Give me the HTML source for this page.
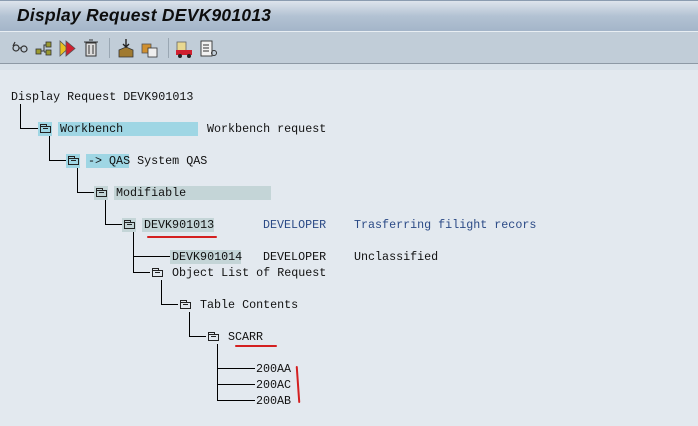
<!DOCTYPE html>
<html><head><meta charset="utf-8"><style>
*{margin:0;padding:0;box-sizing:border-box}
body{width:698px;height:426px;overflow:hidden;background:#e3e9ef;position:relative;font-family:"Liberation Mono",monospace;font-size:11.7px;color:#111}
#title{position:absolute;left:0;top:0;width:698px;height:31px;background:linear-gradient(#dde4ec,#b3c2d3 50%,#a4b5c9);border-top:1px solid #8b9cb0}
#title span{position:absolute;left:17px;top:4px;font:italic bold 17.4px "Liberation Sans",sans-serif;color:#0d0d0d;letter-spacing:.3px}
#tb{position:absolute;left:0;top:31px;width:698px;height:33px;background:#c1cdd8;border-top:1px solid #e8eef3;border-bottom:1px solid #8d99a5}
#strip{position:absolute;left:0;top:64px;width:698px;height:6px;background:#d9e2ea}
.t{position:absolute;line-height:14px;white-space:pre}
.h{position:absolute;height:14px}
.l{position:absolute;background:#000}
.f{position:absolute;width:14px;height:14px}
.f i{position:absolute;left:2px;top:4px;width:11px;height:7px;border:1px solid #222}
.f i:before{content:"";position:absolute;left:-1px;top:-3px;width:5px;height:2px;border:1px solid #222;border-bottom:none}
.f i:after{content:"";position:absolute;left:2px;top:1px;width:5px;height:1px;background:#222}
.r{position:absolute;background:#d42020;border-radius:2px}
.sep{position:absolute;top:38px;width:1px;height:20px;background:#9aa7b3}
</style></head><body>
<div id="title"><span>Display Request DEVK901013</span></div>
<div id="tb">
<svg width="230" height="33" style="position:absolute;left:0;top:0">
<g fill="none" stroke="#333" stroke-width="1.2"><circle cx="16" cy="16" r="3"/><circle cx="24" cy="17" r="3"/><path d="M13 14l2-4M19 16h2"/></g>
<g><rect x="36" y="17" width="5" height="5" fill="#9a9a30" stroke="#333" stroke-width=".8"/><rect x="46" y="10" width="5" height="5" fill="#9a9a30" stroke="#333" stroke-width=".8"/><rect x="46" y="18" width="5" height="5" fill="#9a9a30" stroke="#333" stroke-width=".8"/><path d="M41 19h3v-6h2M44 20h2" stroke="#333" fill="none"/></g>
<path d="M60 9v15l8-7.5z" fill="#e8c020" stroke="#555" stroke-width=".8"/><path d="M66 9v15l9-7.5z" fill="#d02030" stroke="#555" stroke-width=".8"/>
<rect x="86" y="11" width="10" height="13" fill="#ddd" stroke="#333"/><path d="M84 10h14M89 8h4M89 13v9M93 13v9" stroke="#333" fill="none"/>
<path d="M119 18l7-3 7 3v7h-14z" fill="#a07a30" stroke="#333" stroke-width=".8"/><path d="M126 7v8M123 12l3 3 3-3" stroke="#222" fill="none" stroke-width="1.4"/>
<rect x="142" y="12" width="9" height="9" fill="#d09030" stroke="#555" stroke-width=".8"/><rect x="148" y="16" width="9" height="9" fill="#eee" stroke="#333" stroke-width=".8"/>
<rect x="177" y="10" width="9" height="10" fill="#e8d890" stroke="#666" stroke-width=".8"/><rect x="176" y="18" width="16" height="5" fill="#d02030"/><circle cx="180" cy="24" r="2" fill="#222"/><circle cx="189" cy="24" r="2" fill="#222"/>
<rect x="201" y="9" width="11" height="15" fill="#f2f2f2" stroke="#333" stroke-width=".9"/><path d="M203 13h6M203 16h6M203 19h6" stroke="#333"/><circle cx="214" cy="21" r="2.5" fill="none" stroke="#333"/>
</svg>
</div>
<div class="sep" style="left:109px"></div><div class="sep" style="left:168px"></div>
<div id="strip"></div>

<div class="t" style="left:11px;top:90px">Display Request DEVK901013</div>
<div class="l" style="left:20px;top:104px;width:1px;height:25px"></div><div class="l" style="left:20px;top:128px;width:18px;height:1px"></div>
<div class="h" style="left:38px;top:122px;width:14px;background:#9fd6e4"></div><div class="f" style="left:38px;top:122px"><i></i></div>
<div class="h" style="left:58px;top:122px;width:140px;background:#9fd6e4"></div>
<div class="t" style="left:60px;top:122px">Workbench</div><div class="t" style="left:207px;top:122px">Workbench request</div>

<div class="l" style="left:49px;top:136px;width:1px;height:25px"></div><div class="l" style="left:49px;top:160px;width:17px;height:1px"></div>
<div class="h" style="left:66px;top:154px;width:14px;background:#9fd6e4"></div><div class="f" style="left:66px;top:154px"><i></i></div>
<div class="h" style="left:86px;top:154px;width:43px;background:#9fd6e4"></div>
<div class="t" style="left:88px;top:154px">-> QAS System QAS</div>

<div class="l" style="left:77px;top:168px;width:1px;height:25px"></div><div class="l" style="left:77px;top:192px;width:17px;height:1px"></div>
<div class="h" style="left:94px;top:186px;width:14px;background:#c4d5d7"></div><div class="f" style="left:94px;top:186px"><i></i></div>
<div class="h" style="left:114px;top:186px;width:157px;background:#c4d5d7"></div>
<div class="t" style="left:116px;top:186px">Modifiable</div>

<div class="l" style="left:105px;top:200px;width:1px;height:25px"></div><div class="l" style="left:105px;top:224px;width:17px;height:1px"></div>
<div class="h" style="left:122px;top:218px;width:14px;background:#c4d5d7"></div><div class="f" style="left:122px;top:218px"><i></i></div>
<div class="h" style="left:142px;top:218px;width:72px;background:#c4d5d7"></div>
<div class="t" style="left:144px;top:218px">DEVK901013</div>
<div class="t" style="left:263px;top:218px;color:#2b4a86">DEVELOPER</div><div class="t" style="left:354px;top:218px;color:#2b4a86">Trasferring filight recors</div>
<div class="r" style="left:147px;top:236px;width:70px;height:2px"></div>

<div class="l" style="left:133px;top:232px;width:1px;height:41px"></div>
<div class="l" style="left:133px;top:256px;width:38px;height:1px"></div>
<div class="l" style="left:133px;top:272px;width:17px;height:1px"></div>
<div class="h" style="left:170px;top:250px;width:71px;background:#c4d5d7"></div>
<div class="t" style="left:172px;top:250px">DEVK901014</div><div class="t" style="left:263px;top:250px">DEVELOPER</div><div class="t" style="left:354px;top:250px">Unclassified</div>
<div class="f" style="left:150px;top:266px"><i></i></div><div class="t" style="left:172px;top:266px">Object List of Request</div>

<div class="l" style="left:161px;top:280px;width:1px;height:25px"></div><div class="l" style="left:161px;top:304px;width:17px;height:1px"></div>
<div class="f" style="left:178px;top:298px"><i></i></div><div class="t" style="left:200px;top:298px">Table Contents</div>

<div class="l" style="left:189px;top:312px;width:1px;height:25px"></div><div class="l" style="left:189px;top:336px;width:17px;height:1px"></div>
<div class="f" style="left:206px;top:330px"><i></i></div><div class="t" style="left:228px;top:330px">SCARR</div>
<div class="r" style="left:235px;top:345px;width:42px;height:2px"></div>

<div class="l" style="left:217px;top:344px;width:1px;height:57px"></div>
<div class="l" style="left:217px;top:368px;width:38px;height:1px"></div>
<div class="l" style="left:217px;top:384px;width:38px;height:1px"></div>
<div class="l" style="left:217px;top:400px;width:38px;height:1px"></div>
<div class="t" style="left:256px;top:362px">200AA</div><div class="t" style="left:256px;top:378px">200AC</div><div class="t" style="left:256px;top:394px">200AB</div>
<div class="r" style="left:297px;top:366px;width:2px;height:37px;transform:rotate(-4deg)"></div>
</body></html>
